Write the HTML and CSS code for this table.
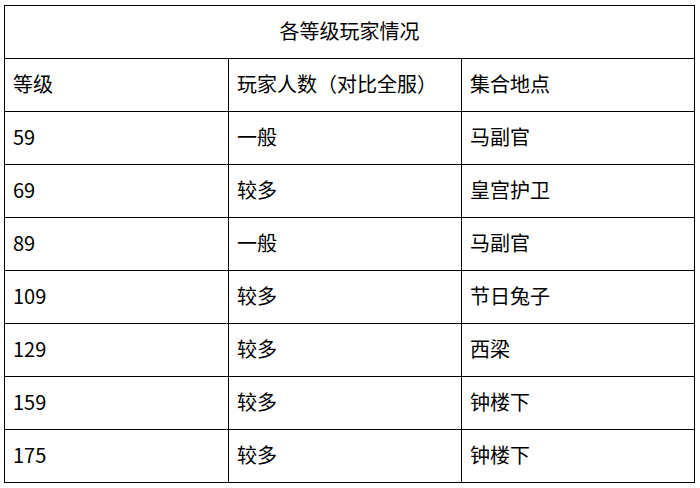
FILE: index.html
```html
<!DOCTYPE html>
<html lang="zh">
<head>
<meta charset="utf-8">
<link rel="stylesheet" href="styles.css">
</head>
<body>
<div class="wrap">
<table class="grid">
  <colgroup>
    <col class="c1"><col class="c2"><col class="c3">
  </colgroup>
  <tr><td class="title" colspan="3">各等级玩家情况</td></tr>
  <tr><td>等级</td><td>玩家人数（对比全服）</td><td>集合地点</td></tr>
  <tr><td>59</td><td>一般</td><td>马副官</td></tr>
  <tr><td>69</td><td>较多</td><td>皇宫护卫</td></tr>
  <tr><td>89</td><td>一般</td><td>马副官</td></tr>
  <tr><td>109</td><td>较多</td><td>节日兔子</td></tr>
  <tr><td>129</td><td>较多</td><td>西梁</td></tr>
  <tr><td>159</td><td>较多</td><td>钟楼下</td></tr>
  <tr><td>175</td><td>较多</td><td>钟楼下</td></tr>
</table>
</div>
</body>
</html>
```
FILE: styles.css
```css
html, body {
  margin: 0;
  padding: 0;
  background: #fff;
}
.wrap {
  padding: 5px 0 0 4px;
}
.grid {
  border-collapse: collapse;
  table-layout: fixed;
  width: 691px;
  font-family: "Noto Sans CJK SC", "Noto Sans", sans-serif;
  font-size: 20px;
  color: #000;
}
.c1 { width: 224px; }
.c2 { width: 233px; }
.c3 { width: 233px; }
.grid td {
  border: 1px solid #000;
  height: 53px;
  padding: 0 0 2px 8px;
  line-height: 24px;
  vertical-align: middle;
  box-sizing: border-box;
  white-space: nowrap;
}
.grid td.title {
  text-align: center;
  padding-left: 0;
}
```
